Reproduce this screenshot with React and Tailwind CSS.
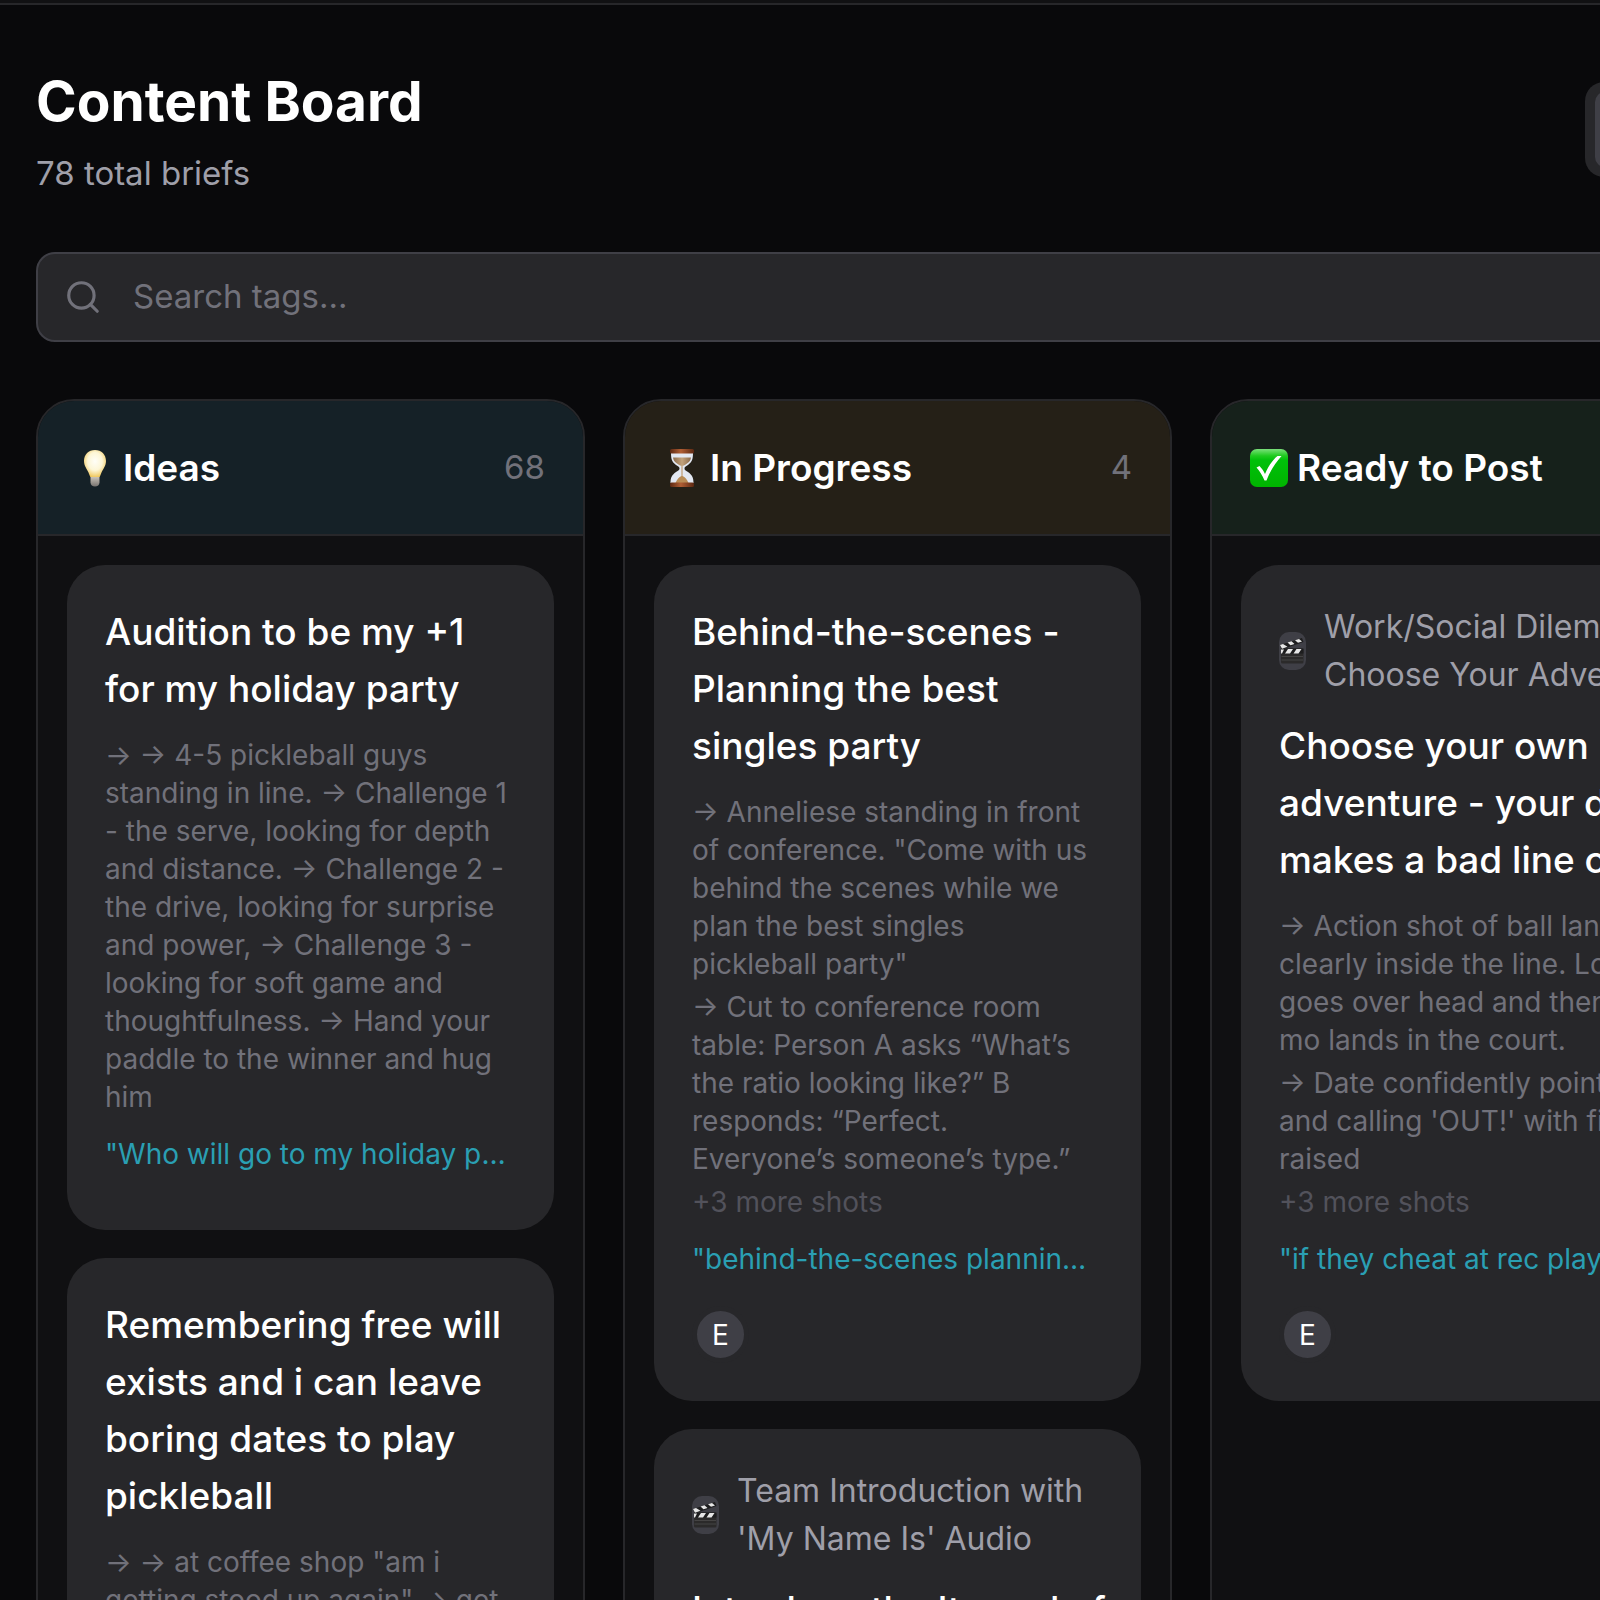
import { Search, LayoutGrid, List } from "lucide-react";

const Bulb = () => (
    <svg viewBox="0 0 38 38" className="size-[38px] shrink-0" aria-hidden="true">
        <defs>
            <radialGradient id="bulb" cx="50%" cy="42%" r="60%">
                <stop offset="0" stopColor="#fffef8" />
                <stop offset="0.55" stopColor="#fdf6d6" />
                <stop offset="1" stopColor="#efc558" />
            </radialGradient>
            <linearGradient id="bulbBase" x1="0" y1="0" x2="0" y2="1">
                <stop offset="0" stopColor="#c9c2b8" />
                <stop offset="1" stopColor="#77736f" />
            </linearGradient>
        </defs>
        <path d="M19 1C12.500 1 8 5.500 8 12c0 5 3 8 4.500 11.500.8 2 1.500 4 1.800 4.500h9.400c.3-.5 1-2.500 1.800-4.500C27 20 30 17 30 12 30 5.500 25.500 1 19 1z" fill="url(#bulb)" />
        <path d="M14.500 28h9v5.500c0 2.500-2 4-4.500 4s-4.500-1.500-4.500-4z" fill="url(#bulbBase)" />
    </svg>
);

const Hourglass = () => (
    <svg viewBox="0 0 38 38" className="size-[38px] shrink-0" aria-hidden="true">
        <defs>
            <linearGradient id="wood" x1="0" y1="0" x2="1" y2="0">
                <stop offset="0" stopColor="#5c2812" />
                <stop offset="0.45" stopColor="#b05e34" />
                <stop offset="1" stopColor="#5c2812" />
            </linearGradient>
            <linearGradient id="sand" x1="0" y1="0" x2="1" y2="0">
                <stop offset="0" stopColor="#8b6b4c" />
                <stop offset="0.5" stopColor="#c2a27c" />
                <stop offset="1" stopColor="#8b6b4c" />
            </linearGradient>
        </defs>
        <path d="M8 4h22c0 6-1 9-5 12-2.500 1.500-3.500 2-3.500 3.500s1 2 3.500 3.500c4 3 5.500 5 5.500 11h-23c0-6 1.500-8 5.500-11 2.500-1.500 3.500-2 3.500-3.500s-1-2-3.500-3.500C9 13 8 10 8 4z" fill="#e3e8f2" />
        <path d="M10 8.500h18c-.5 3-1.500 4.500-4 6-2 1.300-3.500 2.500-5 2.500s-3-1.200-5-2.500c-2.500-1.500-3.500-3-4-6z" fill="url(#sand)" />
        <path d="M18.500 17h1v10c2.500 1 4.500 3.500 6 7h-13c1.500-3.500 3.500-6 6-7z" fill="#b98c56" />
        <rect x="7" y="0" width="24" height="4.500" rx="1.500" fill="url(#wood)" />
        <rect x="7" y="33.500" width="24" height="4.500" rx="1.500" fill="url(#wood)" />
    </svg>
);

const Check = () => (
    <svg viewBox="0 0 38 38" className="size-[38px] shrink-0" aria-hidden="true">
        <defs>
            <linearGradient id="check" x1="0" y1="0" x2="0" y2="1">
                <stop offset="0" stopColor="#7be07b" />
                <stop offset="0.18" stopColor="#1fcb1f" />
                <stop offset="0.3" stopColor="#00c00a" />
                <stop offset="1" stopColor="#00b400" />
            </linearGradient>
        </defs>
        <rect width="38" height="38" rx="7" fill="url(#check)" />
        <path d="M6.500 18.500l3-1.500c2.500 2.500 4 5 5.500 8C18 18 22 11.500 27.500 7h4C25 14.500 20 22 16.500 31.500h-2c-2-5-4.500-9-8-13z" fill="#fff" />
    </svg>
);

const Clapper = () => (
    <svg viewBox="0 0 27 38" className="h-[38px] w-[27px]" aria-hidden="true">
        <path d="M1 13L23 6l1.500 4L2.500 17.500z" fill="#1d1d1e" />
        <rect x="2" y="16.500" width="22.500" height="15" rx="1.500" fill="#2b2a2a" />
        <path d="M2 16.500h22.500v5H2z" fill="#1d1d1e" />
        <path d="M2.500 24.500h21.500M2.500 28h21.500" stroke="#454444" strokeWidth="1" />
        <path d="M1 13l3-1 4.500 2.700-5.500 2zM8.500 10.600l4-1.300 3 2.600-4 1.400zM16 8.200l4-1.300 3 2.600-4 1.300z" fill="#e6e6e6" />
        <path d="M2 17.500h3L3 21.500H2zM9 17h5l-3 4.500H6zM17.500 17h5l-3 4.500h-5z" fill="#e6e6e6" />
    </svg>
);

const columns = [
    {
        title: "Ideas",
        count: 68,
        icon: <Bulb />,
        headerClass: "bg-[#152127]",
        cards: [
            {
                title: "Audition to be my +1\nfor my holiday party",
                shots: [
                    "→ → 4-5 pickleball guys\nstanding in line. → Challenge 1\n- the serve, looking for depth\nand distance. → Challenge 2 -\nthe drive, looking for surprise\nand power, → Challenge 3 -\nlooking for soft game and\nthoughtfulness. → Hand your\npaddle to the winner and hug\nhim",
                ],
                hook: "\"Who will go to my holiday party?\"",
            },
            {
                title: "Remembering free will\nexists and i can leave\nboring dates to play\npickleball",
                shots: ["→ → at coffee shop \"am i\ngetting stood up again\" → get\nup and leave"],
                hook: "\"Remembering free will exists\"",
            },
        ],
    },
    {
        title: "In Progress",
        count: 4,
        icon: <Hourglass />,
        headerClass: "bg-[#252017]",
        cards: [
            {
                title: "Behind-the-scenes -\nPlanning the best\nsingles party",
                shots: [
                    "→ Anneliese standing in front\nof conference. \"Come with us\nbehind the scenes while we\nplan the best singles\npickleball party\"",
                    "→ Cut to conference room\ntable: Person A asks “What’s\nthe ratio looking like?” B\nresponds: “Perfect.\nEveryone’s someone’s type.”",
                ],
                more: 3,
                hook: "\"behind-the-scenes planning the party\"",
                assignee: "E",
            },
            {
                series: "Team Introduction with\n'My Name Is' Audio",
                title: "Introduce the It word of\npickleball",
                shots: ["→ Each person says their name"],
            },
        ],
    },
    {
        title: "Ready to Post",
        count: 6,
        icon: <Check />,
        headerClass: "bg-[#16211b]",
        cards: [
            {
                series: "Work/Social Dilemma:\nChoose Your Adventure",
                title: "Choose your own\nadventure - your date\nmakes a bad line call",
                shots: [
                    "→ Action shot of ball landing\nclearly inside the line. Lob\ngoes over head and then slo\nmo lands in the court.",
                    "→ Date confidently pointing\nand calling 'OUT!' with finger\nraised",
                ],
                more: 3,
                hook: "\"if they cheat at rec play, run\"",
                assignee: "E",
            },
        ],
    },
];

const BriefCard = ({ card }) => (
    <article className="rounded-[38px] bg-[#27272a] p-[38px]">
        {card.series && (
            <div className="mb-[18px] flex items-center gap-[18px]">
                <span className="w-[27px] shrink-0 rounded-[10px] bg-[#3f3f46]">
                    <Clapper />
                </span>
                <span className="whitespace-pre text-[32px] leading-[48px] text-[#9f9fa9]">{card.series}</span>
            </div>
        )}
        <h3 className="whitespace-pre text-[37px] font-medium leading-[57px] text-white">{card.title}</h3>
        <div className="mt-[19px] flex flex-col gap-[5px] text-[28px] leading-[38px] text-[#71717a]">
            {card.shots.map((shot) => (
                <p key={shot} className="whitespace-pre">{shot}</p>
            ))}
            {card.more && <p className="text-[#52525b]">+{card.more} more shots</p>}
        </div>
        {card.hook && (
            <p className="my-[19px] truncate text-[28px] leading-[38px] text-[#2a9fb3]">{card.hook}</p>
        )}
        {card.assignee && (
            <div className="flex pt-[9px]">
                <span className="flex size-[57px] items-center justify-center rounded-full border-[5px] border-[#27272a] bg-[#3f3f46] text-[28px] text-white">
                    {card.assignee}
                </span>
            </div>
        )}
    </article>
);

const Column = ({ column }) => (
    <section className="w-[549px] shrink-0 overflow-hidden rounded-t-[38px] border-2 border-[#27272a] bg-[#101012]">
        <header className={`flex h-[135px] items-center justify-between border-b-2 border-[#27272a] px-[38px] ${column.headerClass}`}>
            <h2 className="flex items-center gap-[9px] text-[37px] font-semibold text-white">
                {column.icon}
                {column.title}
            </h2>
            <span className="text-[33px] text-[#71717a]">{column.count}</span>
        </header>
        <div className="flex flex-col gap-[28px] p-[29px]">
            {column.cards.map((card) => (
                <BriefCard key={card.title} card={card} />
            ))}
        </div>
    </section>
);

const App = () => {
    return (
        <div className="h-screen overflow-hidden bg-[#09090b] font-['Inter',sans-serif]">
            <div className="h-[5px] border-b-2 border-[#27272a] bg-[#111113]" />
            <main className="w-max px-[36px] pt-[57px]">
                <div className="flex items-center justify-between">
                    <div className="flex flex-col gap-[9px]">
                        <h1 className="text-[55px] font-bold leading-[78px] text-white">Content Board</h1>
                        <p className="text-[33px] leading-[48px] text-[#9f9fa9]">78 total briefs</p>
                    </div>
                    <div className="flex rounded-[19px] bg-[#27272a] p-[10px]">
                        <button aria-label="Board view" className="flex h-[75px] w-[77px] items-center justify-center rounded-[10px] bg-[#3f3f46] text-white">
                            <LayoutGrid size={38} />
                        </button>
                        <button aria-label="List view" className="flex h-[75px] w-[77px] items-center justify-center rounded-[10px] text-[#71717a]">
                            <List size={38} />
                        </button>
                    </div>
                </div>

                <label className="mt-[55px] flex h-[90px] items-center gap-[31px] rounded-[19px] border-2 border-[#3f3f46] bg-[#27272a] px-[26px]">
                    <Search size={38} className="shrink-0 text-[#71717a]" />
                    <input
                        type="text"
                        aria-label="Search tags"
                        placeholder="Search tags..."
                        className="w-full bg-transparent text-[33px] text-white outline-none placeholder:text-[#71717a]"
                    />
                </label>

                <div className="mt-[57px] flex gap-[38px]">
                    {columns.map((column) => (
                        <Column key={column.title} column={column} />
                    ))}
                </div>
            </main>
        </div>
    );
};

export default App;
